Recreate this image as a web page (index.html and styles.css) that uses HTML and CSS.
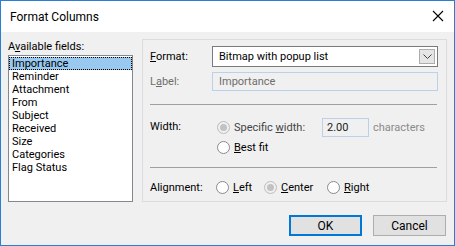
FILE: index.html
```html
<!DOCTYPE html>
<html lang="en">
<head>
    <meta charset="UTF-8">
    <title>Format Columns</title>
    <link rel="stylesheet" href="styles.css">
</head>
<body>
    <div class="window">
        <div class="titlebar">
            <span class="title">Format Columns</span>
            <svg class="close" width="12" height="12" viewBox="0 0 12 12">
                <path d="M1 1L11 11M11 1L1 11" stroke="#000" stroke-width="1.1" fill="none" />
            </svg>
        </div>

        <div class="dialog">
            <div class="main-row">
                <div class="fields">
                    <div class="fields-label">A<u>v</u>ailable fields:</div>
                    <ul class="listbox">
                        <li class="list-item selected">Importance</li>
                        <li class="list-item">Reminder</li>
                        <li class="list-item">Attachment</li>
                        <li class="list-item">From</li>
                        <li class="list-item">Subject</li>
                        <li class="list-item">Received</li>
                        <li class="list-item">Size</li>
                        <li class="list-item">Categories</li>
                        <li class="list-item">Flag Status</li>
                    </ul>
                </div>

                <div class="groupbox">
                    <div class="row row-format">
                        <span class="row-label"><u>F</u>ormat:</span>
                        <div class="combo">
                            <span class="combo-text">Bitmap with popup list</span>
                            <span class="combo-button">
                                <svg width="9" height="5" viewBox="0 0 9 5">
                                    <path d="M0.5 0.5L4.5 4.5L8.5 0.5" stroke="#444" stroke-width="1" fill="none" />
                                </svg>
                            </span>
                        </div>
                    </div>
                    <div class="row row-label-field">
                        <span class="row-label disabled">L<u>a</u>bel:</span>
                        <div class="textbox textbox-wide disabled">Importance</div>
                    </div>

                    <div class="separator"></div>

                    <div class="row row-width">
                        <span class="row-label">Width:</span>
                        <div class="width-options">
                            <div class="option-line">
                                <span class="radio radio-disabled checked"></span>
                                <span class="option-text dim width-label">Specific <u>w</u>idth:</span>
                                <div class="textbox textbox-small">2.00</div>
                                <span class="units">characters</span>
                            </div>
                            <div class="option-line">
                                <span class="radio"></span>
                                <span class="option-text"><u>B</u>est fit</span>
                            </div>
                        </div>
                    </div>

                    <div class="separator separator-low"></div>

                    <div class="row row-align">
                        <span class="row-label">Alignment:</span>
                        <div class="align-options">
                            <span class="align-option align-left">
                                <span class="radio"></span>
                                <span class="option-text"><u>L</u>eft</span>
                            </span>
                            <span class="align-option align-center">
                                <span class="radio radio-disabled checked"></span>
                                <span class="option-text"><u>C</u>enter</span>
                            </span>
                            <span class="align-option">
                                <span class="radio"></span>
                                <span class="option-text"><u>R</u>ight</span>
                            </span>
                        </div>
                    </div>
                </div>
            </div>

            <div class="buttons">
                <button class="button default">OK</button>
                <button class="button">Cancel</button>
            </div>
        </div>
    </div>
</body>
</html>
```

FILE: styles.css
```css
body {
    margin: 0;
    padding: 0;
    font-family: Roboto, "Liberation Sans", sans-serif;
    font-size: 11px;
    color: #000;
}

.window {
    width: 455px;
    height: 246px;
    box-sizing: border-box;
    border: 1px solid #2a7fd4;
    display: flex;
    flex-direction: column;
    background: #f0f0f0;
}

.titlebar {
    height: 31px;
    background: #fff;
    display: flex;
    align-items: center;
    justify-content: space-between;
    padding: 0 10px 0 9px;
    flex-shrink: 0;
}

.title {
    font-size: 12px;
    margin-top: 1px;
}

.close {
    margin-top: -2px;
}

.dialog {
    flex: 1;
    padding: 7px 7px 0 7px;
    display: flex;
    flex-direction: column;
}

.main-row {
    display: flex;
    gap: 9px;
}

/* left column */
.fields {
    width: 125px;
    padding-top: 1px;
}

.fields-label {
    line-height: 13px;
    height: 13px;
    margin-bottom: 2px;
}

.listbox {
    list-style: none;
    margin: 0;
    padding: 1px 0 0 0;
    height: 147px;
    box-sizing: border-box;
    border: 1px solid #828790;
    background: #fff;
}

.list-item {
    line-height: 13px;
    height: 13px;
    padding-left: 3px;
}

.list-item.selected {
    background: #99c9ef;
    outline: 1px dotted #000;
    outline-offset: -1px;
}

/* right group box */
.groupbox {
    width: 305px;
    height: 163px;
    box-sizing: border-box;
    border: 1px solid #dcdcdc;
    padding: 6px 8px 0 7px;
}

.row {
    display: flex;
    align-items: center;
}

.row-label {
    width: 62px;
    flex-shrink: 0;
}

.disabled {
    color: #6d6d6d;
}

.dim {
    color: #444;
}

.combo {
    flex: 1;
    height: 21px;
    box-sizing: border-box;
    border: 1px solid #7a7a7a;
    background: #fff;
    display: flex;
    align-items: center;
    justify-content: space-between;
    padding: 0 2px 0 6px;
}

.combo-button {
    width: 16px;
    height: 15px;
    box-sizing: border-box;
    border: 1px solid #adadad;
    background: #e5e5e5;
    display: flex;
    align-items: center;
    justify-content: center;
}

.row-label-field {
    margin-top: 5px;
}

.textbox {
    box-sizing: border-box;
    border: 1px solid #b9d1ea;
    height: 19px;
    line-height: 17px;
    padding-left: 6px;
}

.textbox-wide {
    flex: 1;
}

.separator {
    height: 1px;
    background: #a0a0a0;
    margin: 13px 1px 0 0;
}

.separator-low {
    margin-top: 10px;
}

.row-width {
    margin-top: 12px;
    align-items: flex-start;
}

.row-width .row-label {
    line-height: 20px;
}

.width-options {
    display: flex;
    flex-direction: column;
}

.option-line {
    display: flex;
    align-items: center;
    height: 20px;
}

.radio {
    width: 13px;
    height: 13px;
    box-sizing: border-box;
    border: 1px solid #8a8a8a;
    border-radius: 50%;
    background: #fff;
    margin-left: 5px;
    margin-right: 4px;
    flex-shrink: 0;
    position: relative;
}

.radio-disabled {
    border-color: #bcbcbc;
    background: #f0f0f0;
}

.radio-disabled.checked::after {
    content: "";
    position: absolute;
    left: 2px;
    top: 2px;
    width: 7px;
    height: 7px;
    border-radius: 50%;
    background: #c2c2c2;
}

.width-label {
    width: 88px;
    flex-shrink: 0;
}

.textbox-small {
    width: 47px;
    padding-left: 4px;
    color: #222;
}

.units {
    color: #8a8a8a;
    margin-left: 4px;
}

.row-align {
    margin-top: 13px;
}

.align-options {
    display: flex;
    align-items: center;
    margin-left: -1px;
}

.align-option {
    display: flex;
    align-items: center;
}

.align-left {
    width: 48px;
}

.align-center {
    width: 63px;
}

.buttons {
    display: flex;
    justify-content: flex-end;
    gap: 11px;
    margin-top: 13px;
    padding-right: 1px;
}

.button {
    width: 73px;
    height: 21px;
    box-sizing: border-box;
    border: 1px solid #adadad;
    background: #e1e1e1;
    font-family: inherit;
    font-size: 12px;
    padding: 0;
    color: #000;
}

.button.default {
    border: 2px solid #0078d7;
}
```
